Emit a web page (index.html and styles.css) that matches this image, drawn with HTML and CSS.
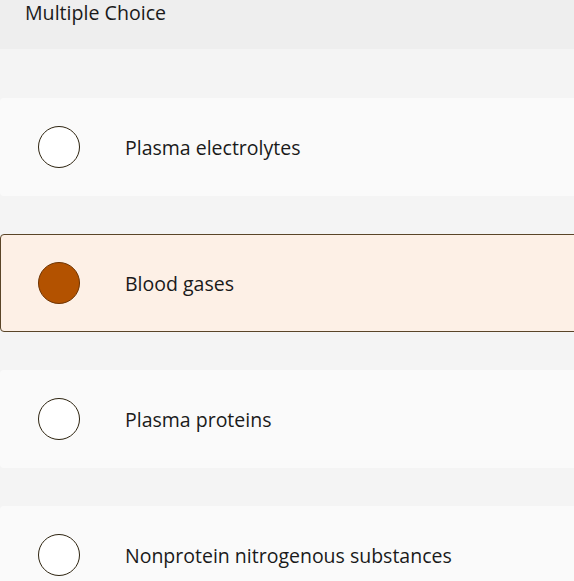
FILE: index.html
```html
<!DOCTYPE html>
<html lang="en">
<head>
<meta charset="utf-8">
<title>Multiple Choice</title>
<link rel="stylesheet" href="styles.css">
</head>
<body>
  <div class="question">
    <div class="question-header">Multiple Choice</div>
    <ul class="choices">
      <li class="choice">
        <span class="radio"></span>
        <span class="label">Plasma electrolytes</span>
      </li>
      <li class="choice is-selected">
        <span class="radio"></span>
        <span class="label">Blood gases</span>
      </li>
      <li class="choice">
        <span class="radio"></span>
        <span class="label">Plasma proteins</span>
      </li>
      <li class="choice">
        <span class="radio"></span>
        <span class="label">Nonprotein nitrogenous substances</span>
      </li>
    </ul>
  </div>
</body>
</html>
```
FILE: styles.css
```css
html, body {
  margin: 0;
  padding: 0;
  background: #f4f4f4;
  overflow: hidden;
}

body {
  font-family: "Open Sans", "Noto Sans", sans-serif;
  color: #1a1a1a;
}

.question-header {
  height: 49px;
  box-sizing: border-box;
  padding: 0 0 0 25px;
  background: #eeeeee;
  font-size: 19.6px;
  line-height: 25px;
}

.choices {
  list-style: none;
  margin: 0 -12px 0 0;
  padding: 49px 0 0;
  display: flex;
  flex-direction: column;
  gap: 38px;
}

.choice {
  height: 98px;
  box-sizing: border-box;
  display: flex;
  align-items: center;
  padding-left: 37px;
  background: #fafafa;
  border: 1px solid transparent;
  border-radius: 4px;
}

.choice.is-selected {
  background: #fdf0e6;
  border-color: #5a4528;
}

.radio {
  width: 42px;
  height: 42px;
  box-sizing: border-box;
  border-radius: 50%;
  border: 1px solid #2e2410;
  background: #ffffff;
  flex: none;
}

.is-selected .radio {
  background: #b35200;
  border-color: #6e3300;
}

.label {
  margin-left: 45px;
  font-size: 19.5px;
}
```
